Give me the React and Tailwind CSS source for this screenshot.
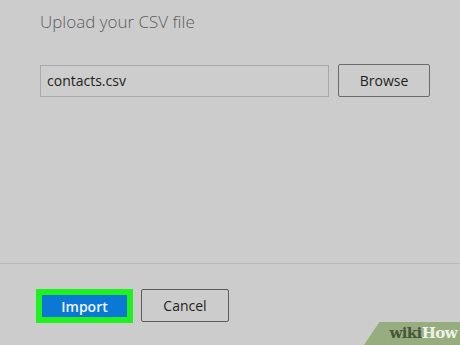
export default function App() {
  return (
    <div className="relative flex h-[345px] w-[460px] flex-col overflow-hidden bg-[#cccccc] font-['Open_Sans',sans-serif]">
      {/* Upload section */}
      <div className="pl-10 pr-[30px] pt-[10px]">
        <h1 className="text-[17px] font-light leading-[24px] text-[#5e5e5e]">
          Upload your CSV file
        </h1>
        <div className="mt-[30px] flex items-center gap-[9px]">
          <div className="flex h-[32px] w-[289px] shrink-0 items-center border border-[#a9a9a9] bg-[#cdcdcd] px-[6px] text-[14px] text-[#1e1e1e]">
            contacts.csv
          </div>
          <button className="h-[33px] w-[92px] shrink-0 rounded-[2px] border border-[#6b6b6b] bg-[#cccccc] text-[14px] text-[#1e1e1e]">
            Browse
          </button>
        </div>
      </div>

      {/* Divider */}
      <div className="mt-auto border-t border-[#b9b9b9]" />

      {/* Footer buttons */}
      <div className="flex h-[81px] items-start gap-[8px] pl-[36px] pt-[25px]">
        <div className="flex h-[34px] w-[97px] items-center justify-center bg-[#1ff01f] p-[6px]">
          <button className="h-full w-full bg-[#0a78d4] text-[14px] font-semibold text-[#eef6ff]">
            Import
          </button>
        </div>
        <button className="h-[33px] w-[88px] rounded-[2px] border border-[#5c5c5c] bg-[#cccccc] text-[14px] text-[#1e1e1e]">
          Cancel
        </button>
      </div>

      {/* wikiHow watermark */}
      <div className="absolute bottom-0 right-0 flex h-[23px] w-[96px] items-center justify-end bg-[#97ad7f] pr-[3px] [clip-path:polygon(16%_0,100%_0,100%_100%,0_100%)]">
        <span className="font-['DejaVu_Serif',serif] text-[15px] font-bold leading-none tracking-[-0.6px] text-[#45563a]">
          wiki<span className="text-[#eef2e8]">How</span>
        </span>
      </div>
    </div>
  );
}
